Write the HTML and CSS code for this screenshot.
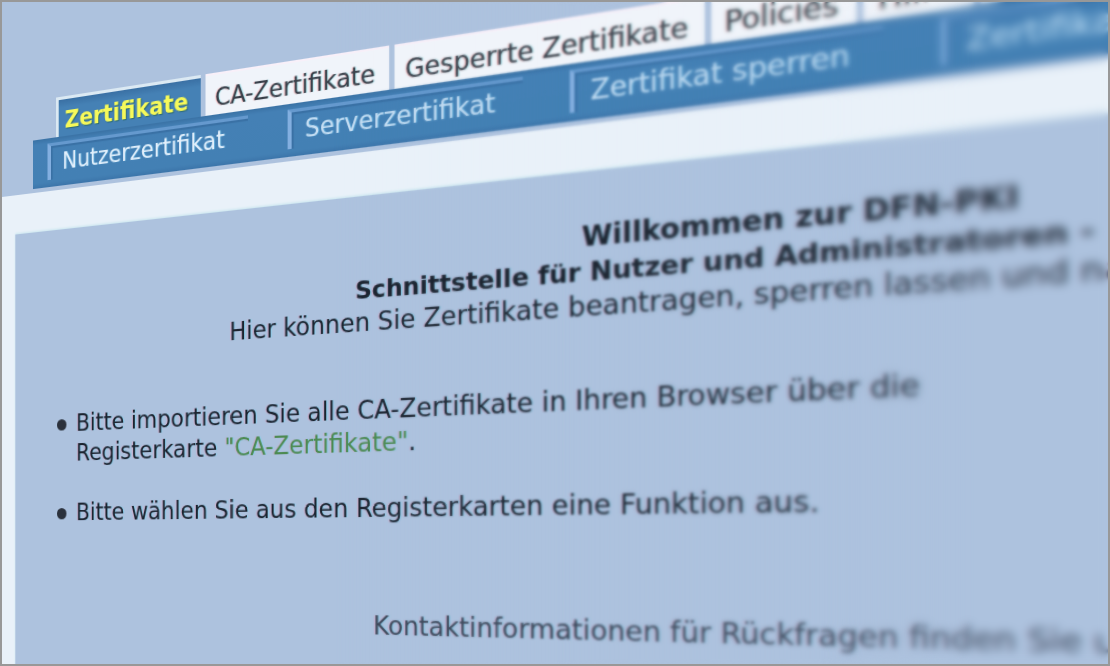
FILE: index.html
```html
<!DOCTYPE html>
<html lang="de">
<head>
<meta charset="utf-8">
<title>DFN-PKI</title>
<link rel="stylesheet" href="styles.css">
</head>
<body>
<div class="frame">
  <div class="page">
    <nav class="tabs">
      <a class="tab tab-active" href="#zertifikate">Zertifikate</a>
      <a class="tab" href="#ca">CA-Zertifikate</a>
      <a class="tab" href="#gesperrte">Gesperrte Zertifikate</a>
      <a class="tab" href="#policies">Policies</a>
      <a class="tab" href="#hilfe">Hilfe</a>
      <span class="tab tab-rest"></span>
    </nav>
    <nav class="subnav">
      <a class="subitem" href="#nutzer">Nutzerzertifikat</a>
      <a class="subitem" href="#server">Serverzertifikat</a>
      <a class="subitem" href="#sperren">Zertifikat sperren</a>
      <a class="subitem" href="#suchen">Zertifikat suchen</a>
    </nav>
    <main class="sheet">
      <div class="panel">
        <h1 class="title">Willkommen zur DFN-PKI</h1>
        <h2 class="subtitle">Schnittstelle für Nutzer und Administratoren -</h2>
        <p class="intro">Hier können Sie Zertifikate beantragen, sperren lassen und nach</p>
        <ul class="steps">
          <li class="step"><p class="step-text">Bitte importieren Sie alle CA-Zertifikate in Ihren Browser über die<br>Registerkarte <a class="ca-link" href="#ca">"CA-Zertifikate"</a>.</p></li>
          <li class="step"><p class="step-text">Bitte wählen Sie aus den Registerkarten eine Funktion aus.</p></li>
        </ul>
        <p class="contact">Kontaktinformationen für Rückfragen finden Sie unter</p>
      </div>
    </main>
  </div>
  <div class="focus focus-near"></div>
  <div class="focus focus-mid"></div>
  <div class="focus focus-far"></div>
</div>
</body>
</html>
```
FILE: styles.css
```css
* { box-sizing: border-box; }

body {
  margin: 0;
  font-family: Verdana, "DejaVu Sans", sans-serif;
  font-size: 23px;
  line-height: 29px;
  color: #1c2430;
  background: #adc2de;
}

h1, h2, p, ul { margin: 0; padding: 0; font-size: inherit; }
a { color: inherit; text-decoration: none; }

.frame {
  position: relative;
  height: 100vh;
  overflow: hidden;
  border: 2px solid #989898;
  background: #adc2de;
  perspective: 1927px;
  perspective-origin: 0 83%;
}

/* The page turns around its left edge, its right side towards the viewer. */
.page {
  width: 100%;
  white-space: nowrap;
  transform: rotateY(-34deg);
  transform-origin: 0 0;
}

.tabs {
  display: flex;
  gap: 5px;
  padding: 104px 0 0 64px;
}

.tab {
  flex: none;
  height: 39px;
  padding: 7px 13px 0 10px;
  background: #f0f4fa;
  border-top: 2px solid #f8f0f9;
  color: #3a404a;
  text-shadow: 1px 0 1px rgba(120, 220, 230, 0.6), -1px 0 1px rgba(240, 130, 130, 0.6);
}

.tab-active {
  padding: 6px 13px 0 7px;
  background: linear-gradient(#3a70a4, #4581b5 8px);
  border-top: 3px solid #dbe9f3;
  border-left: 3px solid #dbe9f3;
  color: #f6f95a;
  font-weight: bold;
  text-shadow: 1px 1px 1px #2d6a70;
}

.tab-rest { width: 200px; }

.subnav {
  display: flex;
  gap: 40px;
  height: 48px;
  margin-left: 37px;
  padding: 5px 0 0 17px;
  background: linear-gradient(#3a72a5, #4480b5 5px, #4380b4 43px, #3c75aa);
  color: #c6def3;
}

.subitem {
  flex: none;
  height: 36px;
  padding: 0 24px 0 13px;
  line-height: 33px;
  border-top: 3px solid #6599ce;
  border-left: 4px solid #83afe0;
  box-shadow: inset 2px 2px 1px #3a71a5;
  text-shadow: 1px 0 1px rgba(120, 210, 250, 0.5);
}

.subitem:first-child { color: #e2effb; }

.sheet {
  margin-top: 4px;
  padding: 39px 0 0 16px;
  background: #e9f1f9;
}

.panel {
  padding: 40px 0 160px 49px;
  background: #adc2de;
  box-shadow: 0 -1px 2px #c9e6ef;
  text-shadow: 1px 0 1px rgba(130, 205, 235, 0.9), -1px 0 1px rgba(215, 165, 195, 0.8);
}

.title { padding-left: 516px; }
.subtitle { padding-left: 314px; font-size: 22px; }
.intro { padding-left: 189px; }

.steps {
  display: grid;
  gap: 29px;
  margin-top: 49px;
  list-style: none;
}

.step {
  display: flex;
  gap: 11px;
}

.step::before {
  content: "";
  flex: none;
  width: 11px;
  height: 11px;
  margin-top: 10px;
  border-radius: 50%;
  background: #2b313c;
}

.ca-link { color: #4d8a52; }

.contact {
  margin-top: 75px;
  padding-left: 331px;
  color: #3c4658;
}

/* Depth of field: each layer softens what lies further to the right. */
.focus {
  position: absolute;
  inset: 0;
  pointer-events: none;
}

.focus-near {
  backdrop-filter: blur(1px);
  mask-image: linear-gradient(90deg, transparent 30%, #000 52%);
}

.focus-mid {
  backdrop-filter: blur(2px);
  mask-image: linear-gradient(90deg, transparent 50%, #000 78%);
}

.focus-far {
  backdrop-filter: blur(4px);
  mask-image: linear-gradient(90deg, transparent 74%, #000 88%);
}
```
